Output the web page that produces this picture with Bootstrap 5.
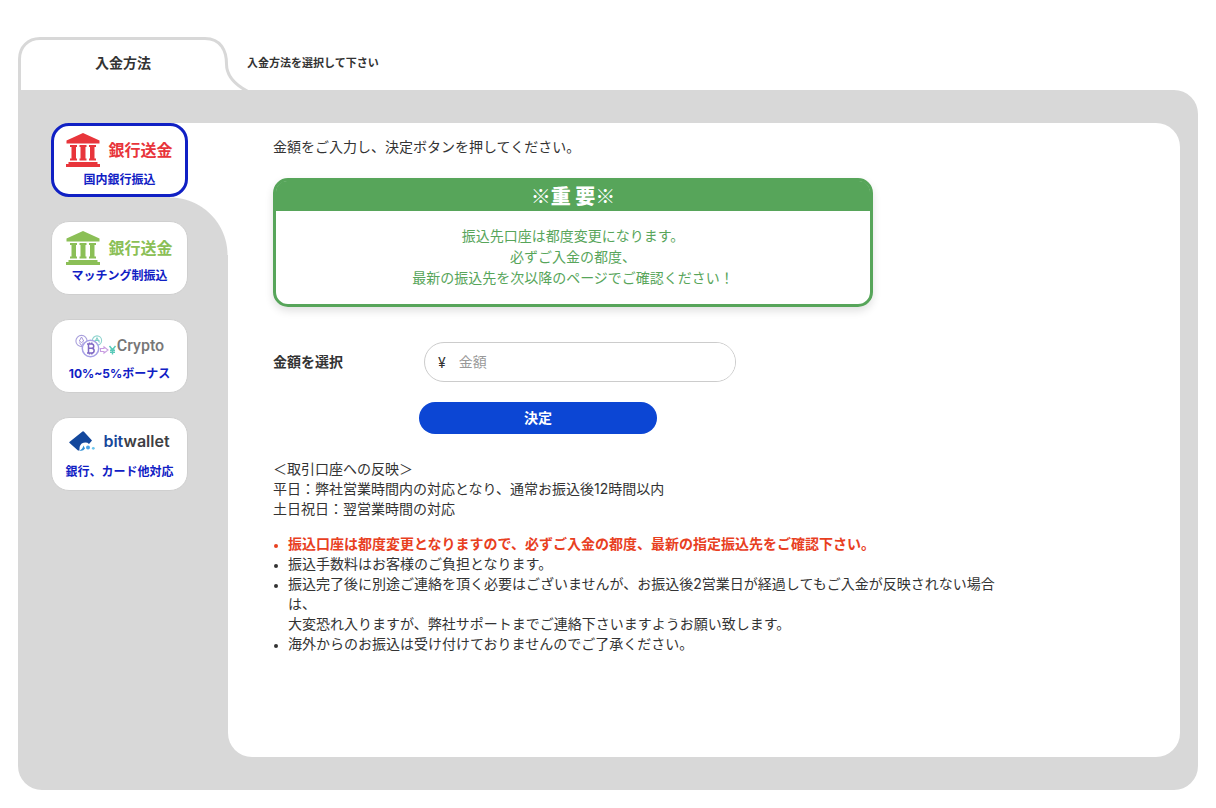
<!DOCTYPE html>
<html lang="ja">
<head>
<meta charset="utf-8">
<meta name="viewport" content="width=device-width, initial-scale=1">
<title>入金方法</title>
<link rel="stylesheet" href="https://cdn.jsdelivr.net/npm/bootstrap@5.3.0/dist/css/bootstrap.min.css">
<style>
  :root { --frame: #d8d8d8; --navy: #1020c4; --notice: #57a55a; --submit: #0c46d4; }
  body { font-family: Inter, "Noto Sans CJK JP", sans-serif; font-size: 14px; line-height: 20px; color: #333; background: #fff; }
  .page { padding: 37px 18px 18px; }

  /* folder tab */
  .folder-tab { width: 210px; height: 53px; padding-bottom: 2px; position: relative; }
  .folder-tab svg { position: absolute; left: 0; top: 0; }
  .folder-tab h1 { font-size: 14px; line-height: 20px; font-weight: 700; }
  .tab-hint { font-size: 11px; font-weight: 700; margin-left: 19px; padding-bottom: 2px; }

  .folder { background: var(--frame); border-radius: 0 24px 24px 24px; padding: 33px 18px 33px 33px; }
  /* white bridge that joins the selected method to the panel */
  .methods { width: 177px; background: radial-gradient(circle 58px at 0 100%, var(--frame) 57px, #fff 58px) top right / 58px 132px no-repeat; }
  .method { width: 137px; height: 74px; padding: 9px 0 0; border: 1px solid #cfcfcf; border-radius: 18px; background: #fff; color: var(--navy); }
  .method.selected { border: 3px solid var(--navy); padding-top: 7px; }
  .method-logo { height: 34px; font-size: 16px; font-weight: 700; line-height: 34px; }
  .method-name { font-size: 12px; line-height: 16px; font-weight: 700; margin-top: 3px; }
  .selected .method-name { margin-top: 5px; }
  .logo-red { color: #e8353b; }
  .logo-green { color: #8bbf56; }
  .logo-crypto { font-family: Roboto, sans-serif; font-weight: 500; color: #777; line-height: 32px; }
  .logo-bit { font-size: 16px; font-weight: 600; color: #3f3f44; line-height: 28px; }
  .logo-bit b { font-weight: 600; color: #17479b; }

  .panel { background: #fff; border-radius: 0 24px 24px 24px; min-height: 634px; padding: 14px 45px; }
  .panel-body { max-width: 730px; }
  .notice { max-width: 600px; border: 3px solid var(--notice); border-radius: 15px; color: var(--notice); box-shadow: 0 4px 8px rgba(0,0,0,.12); margin-top: 21px; }
  .notice h2 { background: var(--notice); border-radius: 11px 11px 0 0; color: #fff; font-family: "Noto Sans CJK JP", sans-serif; font-size: 20px; line-height: 30px; font-weight: 900; }
  .notice p { line-height: 21px; padding: 14px 0 16px; }
  .amount-row { margin-top: 35px; }
  .amount-label { width: 151px; font-weight: 700; }
  .amount { width: 312px; height: 40px; border: 1px solid #ccc; border-radius: 20px; }
  .amount .input-group-text { font-size: 14px; color: #333; padding: 0 14px 0 13px; }
  .amount .form-control { font-size: 14px; line-height: 20px; padding: 0; }
  .amount .form-control::placeholder { color: #999; }
  .submit { width: 238px; height: 32px; margin: 20px 0 25px 146px; background: var(--submit); color: #fff; font-size: 14px; font-weight: 700; line-height: 20px; padding: 0; }
  .submit:hover { background: #0a3cb8; color: #fff; }
  .notes { padding-left: 15px; margin-top: 15px; }
  .notes li::marker { font-size: 11px; }
  .alert-line { color: #e8401f; font-weight: 700; }
</style>
</head>
<body>
<main class="page">
  <header class="d-flex align-items-center">
    <div class="folder-tab d-flex align-items-center justify-content-center flex-shrink-0">
      <svg width="232" height="53" viewBox="0 0 232 53" fill="none" stroke="#d8d8d8" stroke-width="3" aria-hidden="true">
        <path d="M1.500 53V22C1.500 10 10 1.500 22 1.500H187C203 1.500 208.500 14 208.500 27C208.500 41 219 49 231 55"/>
      </svg>
      <h1 class="mb-0 position-relative">入金方法</h1>
    </div>
    <span class="tab-hint">入金方法を選択して下さい</span>
  </header>

  <div class="folder d-flex">
    <nav class="methods d-flex flex-column gap-4 flex-shrink-0" aria-label="入金方法">
      <button type="button" class="method selected d-flex flex-column align-items-center" aria-pressed="true">
        <span class="method-logo logo-red d-flex align-items-center">
          <svg class="me-2" width="34" height="34" viewBox="0 0 34 34" fill="currentColor" aria-hidden="true">
            <path id="bank" d="M17 0L33.500 7.500V10.500H0.500V7.500ZM4 12H11V14H10V25.500H11V27.500H4V25.500H5.500V14H4ZM13.500 12H20.500V14H19.500V25.500H20.500V27.500H13.500V25.500H14.500V14H13.500ZM23 12H30V14H28.500V25.500H30V27.500H23V25.500H24V14H23ZM2.500 29H31.500V31H34V34H0V31H2.500Z"/>
          </svg>銀行送金
        </span>
        <span class="method-name">国内銀行振込</span>
      </button>
      <button type="button" class="method d-flex flex-column align-items-center">
        <span class="method-logo logo-green d-flex align-items-center">
          <svg class="me-2" width="34" height="34" viewBox="0 0 34 34" fill="currentColor" aria-hidden="true"><use href="#bank"/></svg>銀行送金
        </span>
        <span class="method-name">マッチング制振込</span>
      </button>
      <button type="button" class="method d-flex flex-column align-items-center">
        <span class="method-logo logo-crypto d-flex align-items-center">
          <svg width="42" height="26" viewBox="0 0 42 26" fill="none" stroke-width="1.100" aria-hidden="true">
            <circle cx="6.500" cy="8" r="5.600" stroke="#a9a0dc"/>
            <path d="M6.500 4L4.300 8L6.500 9.500L8.700 8ZM4.300 9.500L6.500 12.500L8.700 9.500" stroke="#a493d8" stroke-width="1"/>
            <circle cx="22" cy="7.500" r="4.600" stroke="#8fd3cf"/>
            <path d="M19.500 9.500L22 5L24.500 9.500M19.500 7.500H24.500" stroke="#7fcfc6"/>
            <circle cx="15.500" cy="15.500" r="8.200" fill="#fff" stroke="#a7a0e6" stroke-width="1.500"/>
            <path d="M13.500 11V20M12 11H16.500C19.500 11 19.500 15.300 16.500 15.300H13.500M16.500 15.300C20 15.300 20 20 16.500 20H12M14.500 9.500V11M16.800 9.500V11M14.500 20V21.500M16.800 20V21.500" stroke="#8069c4" stroke-width="1.500"/>
            <path d="M25.500 15.500H29V13.800L33 17L29 20.200V18.500H25.500Z" stroke="#c79be0"/>
            <path d="M34.500 13L37.500 16.800L40.500 13M37.500 16.800V21.500M35 17.300H40M35 19.300H40" stroke="#58c9b8" stroke-width="1.400"/>
          </svg>Crypto
        </span>
        <span class="method-name">10%~5%ボーナス</span>
      </button>
      <button type="button" class="method d-flex flex-column align-items-center">
        <span class="method-logo logo-bit d-flex align-items-start">
          <svg class="me-2 mt-1" width="26" height="21" viewBox="0 0 26 21" aria-hidden="true">
            <path d="M1 10.500L13.500 0.500Q14.300 0 15 0.700L23 9.500L20 13Q18 11 14.500 11.800Q10 13 10.500 19.500L9 19.500L0.600 12Q-0.300 11.300 1 10.500Z" fill="#13479c"/>
            <path d="M14.500 14.500Q13.500 18.500 10.500 19.500Q14 20.500 16 17.500Z" fill="#2e8fd6"/>
            <circle cx="19" cy="16.500" r="2" fill="#4aa3e6"/>
            <circle cx="24.300" cy="17.300" r="1.400" fill="#6cc5ee"/>
          </svg><span><b>bit</b>wallet</span>
        </span>
        <span class="method-name">銀行、カード他対応</span>
      </button>
    </nav>

    <section class="panel flex-grow-1">
      <div class="panel-body">
        <p class="mb-0">金額をご入力し、決定ボタンを押してください。</p>

        <div class="notice text-center">
          <h2 class="mb-0">※重 要※</h2>
          <p class="mb-0">振込先口座は都度変更になります。<br>必ずご入金の都度、<br>最新の振込先を次以降のページでご確認ください！</p>
        </div>

        <form>
          <div class="amount-row d-flex align-items-center">
            <label class="amount-label" for="amount">金額を選択</label>
            <div class="amount input-group flex-nowrap overflow-hidden">
              <span class="input-group-text bg-transparent border-0">¥</span>
              <input id="amount" type="text" inputmode="numeric" class="form-control border-0 shadow-none" placeholder="金額">
            </div>
          </div>
          <button type="button" class="submit btn rounded-pill border-0 d-block">決定</button>
        </form>

        <p class="mb-0">＜取引口座への反映＞<br>平日：弊社営業時間内の対応となり、通常お振込後12時間以内<br>土日祝日：翌営業時間の対応</p>

        <ul class="notes mb-0">
          <li class="alert-line">振込口座は都度変更となりますので、必ずご入金の都度、最新の指定振込先をご確認下さい。</li>
          <li>振込手数料はお客様のご負担となります。</li>
          <li>振込完了後に別途ご連絡を頂く必要はございませんが、お振込後2営業日が経過してもご入金が反映されない場合は、<br>大変恐れ入りますが、弊社サポートまでご連絡下さいますようお願い致します。</li>
          <li>海外からのお振込は受け付けておりませんのでご了承ください。</li>
        </ul>
      </div>
    </section>
  </div>
</main>
<script src="https://cdn.jsdelivr.net/npm/bootstrap@5.3.0/dist/js/bootstrap.bundle.min.js"></script>
</body>
</html>
